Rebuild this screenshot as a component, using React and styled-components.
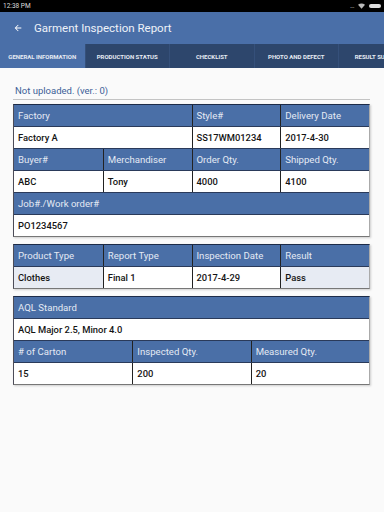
import React from 'react';
import styled, { createGlobalStyle } from 'styled-components';

const GlobalStyle = createGlobalStyle`
  html, body {
    margin: 0;
    padding: 0;
    background: #fafafa;
    font-family: Roboto, "Liberation Sans", sans-serif;
  }
`;

const tabs = ['General Information', 'Production Status', 'Checklist', 'Photo and Defect', 'Result Summary'];

const FOUR = '1fr 1fr 1fr 1fr';
const THREE = '1fr 1fr 1fr';

const tables = [
  [
    { cols: FOUR, header: true, cells: [{ t: 'Factory', span: 2 }, { t: 'Style#' }, { t: 'Delivery Date' }] },
    { cols: FOUR, cells: [{ t: 'Factory A', span: 2 }, { t: 'SS17WM01234' }, { t: '2017-4-30' }] },
    { cols: FOUR, header: true, cells: [{ t: 'Buyer#' }, { t: 'Merchandiser' }, { t: 'Order Qty.' }, { t: 'Shipped Qty.' }] },
    { cols: FOUR, cells: [{ t: 'ABC' }, { t: 'Tony' }, { t: '4000' }, { t: '4100' }] },
    { cols: '1fr', header: true, cells: [{ t: 'Job#./Work order#' }] },
    { cols: '1fr', cells: [{ t: 'PO1234567' }] },
  ],
  [
    { cols: FOUR, header: true, cells: [{ t: 'Product Type' }, { t: 'Report Type' }, { t: 'Inspection Date' }, { t: 'Result' }] },
    { cols: FOUR, cells: [{ t: 'Clothes', tint: true }, { t: 'Final 1' }, { t: '2017-4-29' }, { t: 'Pass', tint: true }] },
  ],
  [
    { cols: '1fr', header: true, cells: [{ t: 'AQL Standard' }] },
    { cols: '1fr', cells: [{ t: 'AQL Major 2.5, Minor 4.0' }] },
    { cols: THREE, header: true, cells: [{ t: '# of Carton' }, { t: 'Inspected Qty.' }, { t: 'Measured Qty.' }] },
    { cols: THREE, cells: [{ t: '15' }, { t: '200' }, { t: '20' }] },
  ],
];

const App = () => {
  return (
    <>
      <GlobalStyle />
      <Screen>
        <StatusBar>
          <span>12:38 PM</span>
          <StatusIcons>
            <Dots>...</Dots>
            <svg width="7" height="6" viewBox="0 0 8 6">
              <path d="M0 1.5 Q4 -1.5 8 1.5 L4 6 Z" fill="#bbb" />
            </svg>
            <Battery />
          </StatusIcons>
        </StatusBar>
        <AppBar>
          <svg width="10" height="10" viewBox="0 0 24 24">
            <path d="M20 11H7.8l5.6-5.6L12 4l-8 8 8 8 1.4-1.4L7.8 13H20z" fill="#fff" />
          </svg>
          <Title>Garment Inspection Report</Title>
        </AppBar>
        <TabBar>
          {tabs.map((t, i) => (
            <Tab key={t} active={i === 0}>{t}</Tab>
          ))}
        </TabBar>
        <Content>
          <Status>Not uploaded. (ver.: 0)</Status>
          {tables.map((rows, ti) => (
            <Table key={ti}>
              {rows.map((row, ri) => (
                <Row key={ri} cols={row.cols} header={row.header}>
                  {row.cells.map((c, ci) => (
                    <Cell key={ci} header={row.header} span={c.span} tint={c.tint}>
                      {c.t}
                    </Cell>
                  ))}
                </Row>
              ))}
            </Table>
          ))}
        </Content>
      </Screen>
    </>
  );
};

const Screen = styled.div`
  width: 384px;
  height: 512px;
  background: #fafafa;
  overflow: hidden;
`;

const StatusBar = styled.div`
  height: 12px;
  background: #000;
  color: #ddd;
  font-size: 6.5px;
  display: flex;
  align-items: center;
  justify-content: space-between;
  padding: 0 3px 0 3px;
`;

const StatusIcons = styled.div`
  display: flex;
  align-items: center;
  gap: 4px;
`;

const Dots = styled.span`
  color: #bbb;
  font-size: 7px;
  line-height: 6px;
  letter-spacing: -0.5px;
`;

const Battery = styled.div`
  width: 12px;
  height: 4px;
  border-radius: 2px;
  background: #ddd;
`;

const AppBar = styled.div`
  height: 32px;
  background: #4a6fa8;
  display: flex;
  align-items: center;
  padding-left: 13px;
  gap: 11px;
`;

const Title = styled.div`
  color: #eef2f8;
  font-size: 11.5px;
`;

const TabBar = styled.div`
  height: 24px;
  display: flex;
  background: #2d466c;
  overflow: hidden;
`;

const Tab = styled.div`
  flex: 0 0 84.5px;
  display: flex;
  align-items: center;
  justify-content: center;
  white-space: nowrap;
  text-transform: uppercase;
  font-size: 6px;
  font-weight: 700;
  color: #e6ebf3;
  background: ${(p) => (p.active ? '#4a6fa8' : '#2d466c')};
  border-left: ${(p) => (p.active ? 'none' : '1px solid #35507a')};
  box-sizing: border-box;
`;

const Content = styled.div`
  padding: 17px 14px 0 13px;
  display: flex;
  flex-direction: column;
  gap: 7px;
`;

const Status = styled.div`
  color: #3d5f98;
  font-size: 9.5px;
  padding: 0 0 3px 2px;
  margin-bottom: -3px;
  border-bottom: 1px solid #c4c4c4;
`;

const Table = styled.div`
  border-top: 1px solid #1c2b48;
  border-left: 1px solid #4c4c58;
  border-bottom: 1px solid #777;
  border-right: 1px solid #aaa;
  box-shadow: 1px 1px 2px rgba(0, 0, 0, 0.18);
  background: #fff;
`;

const Row = styled.div`
  display: grid;
  grid-template-columns: ${(p) => p.cols};
  height: 21px;
  & + & {
    border-top: 1px solid ${(p) => (p.header ? '#1a1a22' : '#2a3a5a')};
  }
`;

const Cell = styled.div`
  grid-column: ${(p) => (p.span ? `span ${p.span}` : 'auto')};
  display: flex;
  align-items: center;
  padding-left: 4px;
  font-size: ${(p) => (p.header ? '9.6px' : '9.4px')};
  font-weight: ${(p) => (p.header ? 400 : 500)};
  color: ${(p) => (p.header ? '#e4eaf4' : '#141414')};
  background: ${(p) => (p.header ? '#4a6fa7' : p.tint ? '#e7ebf3' : '#fff')};
  white-space: nowrap;
  overflow: hidden;
  & + & {
    border-left: 1px solid ${(p) => (p.header ? '#243a60' : '#222')};
  }
`;

export default App;
